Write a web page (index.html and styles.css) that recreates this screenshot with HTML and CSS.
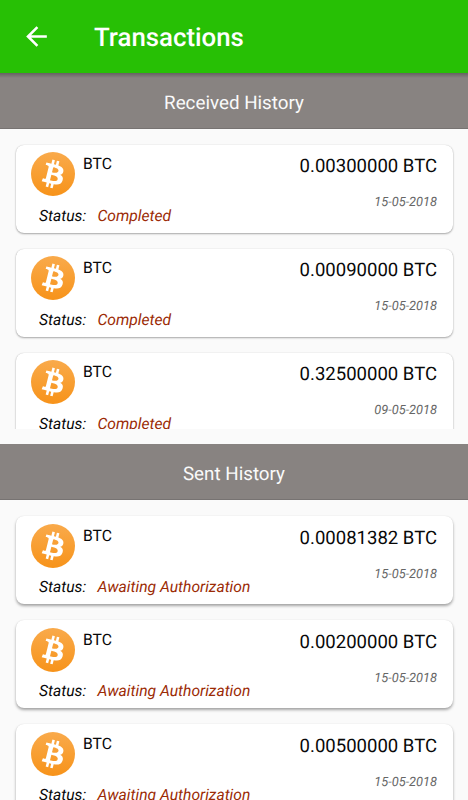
FILE: index.html
```html
<!DOCTYPE html>
<html lang="en">
<head>
    <meta charset="UTF-8">
    <title>Transactions</title>
    <link rel="stylesheet" href="styles.css">
</head>
<body>
    <svg class="defs" width="0" height="0">
        <defs>
            <linearGradient id="orange" x1="0" y1="0" x2="0" y2="1">
                <stop offset="0" stop-color="#f9aa4b"/>
                <stop offset="1" stop-color="#f7931a"/>
            </linearGradient>
            <symbol id="btc" viewBox="0 0 32 32">
                <circle cx="16" cy="16" r="16" fill="url(#orange)"/>
                <path fill="#fff" transform="translate(-.8 -.8) scale(1.05)" d="M23.189 14.02c.314-2.096-1.283-3.223-3.465-3.975l.708-2.84-1.728-.43-.69 2.765c-.454-.114-.92-.22-1.385-.326l.695-2.783L15.596 6l-.708 2.839c-.376-.086-.746-.17-1.104-.26l.002-.009-2.384-.595-.46 1.846s1.283.294 1.256.312c.7.175.826.638.805 1.006l-.806 3.235c.048.012.11.03.18.057l-.183-.045-1.13 4.532c-.086.212-.303.531-.793.41.018.025-1.256-.313-1.256-.313l-.858 1.978 2.25.561c.418.105.828.215 1.231.318l-.715 2.872 1.727.43.708-2.84c.472.127.93.245 1.378.357l-.706 2.828 1.728.43.715-2.866c2.948.558 5.164.333 6.097-2.333.752-2.146-.037-3.385-1.588-4.192 1.13-.26 1.98-1.003 2.207-2.538zm-3.95 5.538c-.533 2.147-4.148.986-5.32.695l.95-3.805c1.172.293 4.929.872 4.37 3.11zm.535-5.569c-.487 1.953-3.495.96-4.47.717l.86-3.45c.975.243 4.118.696 3.61 2.733z"/>
            </symbol>
        </defs>
    </svg>

    <header class="toolbar">
        <svg class="back" viewBox="0 0 24 24"><path d="M20 11H7.83l5.59-5.59L12 4l-8 8 8 8 1.41-1.41L7.83 13H20v-2z"/></svg>
        <h1>Transactions</h1>
    </header>

    <h2 class="section-title received-title">Received History</h2>
    <div class="list received" id="received"></div>

    <h2 class="section-title">Sent History</h2>
    <div class="list sent" id="sent"></div>

    <script>
        const received = [
            { amount: '0.00300000', date: '15-05-2018', status: 'Completed' },
            { amount: '0.00090000', date: '15-05-2018', status: 'Completed' },
            { amount: '0.32500000', date: '09-05-2018', status: 'Completed' }
        ];
        const sent = [
            { amount: '0.00081382', date: '15-05-2018', status: 'Awaiting Authorization' },
            { amount: '0.00200000', date: '15-05-2018', status: 'Awaiting Authorization' },
            { amount: '0.00500000', date: '15-05-2018', status: 'Awaiting Authorization' }
        ];

        function showList(id, items) {
            document.getElementById(id).innerHTML = items.map(item => `
                <div class="card">
                    <svg class="coin"><use href="#btc"/></svg>
                    <div class="currency">BTC</div>
                    <div class="details">
                        <div class="amount">${item.amount} BTC</div>
                        <div class="date">${item.date}</div>
                    </div>
                    <div class="status"><span class="label">Status:</span><span class="value">${item.status}</span></div>
                </div>
            `).join('');
        }

        showList('received', received);
        showList('sent', sent);
    </script>
</body>
</html>
```

FILE: styles.css
```css
* {
    box-sizing: border-box;
}

body {
    display: flex;
    flex-direction: column;
    height: 800px;
    margin: 0;
    overflow: hidden;
    font-family: Roboto, sans-serif;
    background-color: #fafafa;
    color: #080808;
    text-rendering: geometricPrecision;
}

.defs {
    position: absolute;
}

.toolbar {
    display: flex;
    flex: none;
    align-items: center;
    height: 73px;
    padding-left: 21px;
    background-color: #27c005;
}

.back {
    width: 31px;
    height: 31px;
    fill: #fff;
}

.toolbar h1 {
    margin: 3px 0 0 42px;
    font-size: 25.8px;
    font-weight: 500;
    line-height: 32px;
    color: #fff;
}

.section-title {
    flex: none;
    height: 56px;
    margin: 0;
    border-bottom: 1px solid #777372;
    background-color: #888381;
    color: #fafafa;
    font-size: 18.8px;
    font-weight: 400;
    line-height: 60px;
    text-align: center;
}

.received-title {
    background-image: linear-gradient(rgba(0,0,0,0.25), transparent 5px);
}

.list {
    display: flex;
    flex-direction: column;
    gap: 16px;
    padding: 16px 15.5px 0;
    overflow: hidden;
}

.received {
    flex: none;
    height: 299.5px;
    margin-bottom: 15.5px;
}

.sent {
    flex: 1;
}

.card {
    display: grid;
    flex: none;
    grid-template-columns: 44px 1fr auto;
    grid-template-rows: 52px 36px;
    column-gap: 8px;
    height: 88px;
    padding: 0 15.5px;
    border-radius: 8px;
    background-color: #fff;
    box-shadow: 0 1px 2px rgba(0,0,0,0.32), 0 0 1px rgba(0,0,0,0.2);
}

.coin {
    width: 44px;
    height: 44px;
    margin-top: 7px;
}

.currency {
    padding-top: 9px;
    font-size: 15.7px;
    line-height: 20px;
}

.details {
    grid-column: 3;
    grid-row: 1 / 3;
    text-align: right;
}

.amount {
    padding-top: 10px;
    font-size: 18.55px;
    line-height: 23px;
}

.date {
    margin-top: 16px;
    font-size: 12.8px;
    font-style: italic;
    line-height: 17px;
    color: #666;
}

.status {
    grid-column: 1 / 3;
    grid-row: 2;
    padding: 9px 0 0 8px;
    font-size: 15.65px;
    font-style: italic;
    line-height: 20px;
    white-space: nowrap;
}

.label {
    display: inline-block;
    width: 58.5px;
}

.value {
    color: #9b2b05;
}

.sent .card {
    box-shadow: 0 2px 3px rgba(0,0,0,0.34), 0 0 1px rgba(0,0,0,0.12);
}

.sent .coin {
    margin-top: 7.5px;
}

.sent .currency {
    padding-top: 10px;
}

.sent .amount {
    padding-top: 11px;
}
```
